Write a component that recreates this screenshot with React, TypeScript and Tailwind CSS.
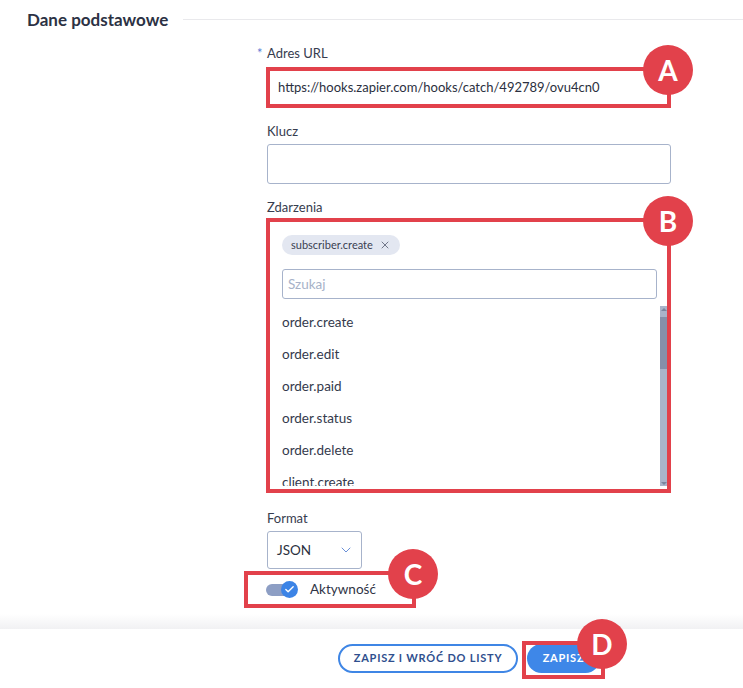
import { Check, ChevronDown, X } from "lucide-react";
import type { ReactNode } from "react";

const EVENTS = [
  "order.create",
  "order.edit",
  "order.paid",
  "order.status",
  "order.delete",
  "client.create",
];

function Marker({ letter }: { letter: string }) {
  return (
    <span className="absolute -right-[26px] -top-[26px] z-10 flex h-[50px] w-[50px] items-center justify-center rounded-full bg-[#e2414b] text-[28px] font-bold leading-none text-white">
      {letter}
    </span>
  );
}

function Label({ children, required }: { children: ReactNode; required?: boolean }) {
  return (
    <div className="relative h-[20px] text-[13px] leading-[20px] text-[#373c4e]">
      {required && (
        <span className="absolute -left-[10px] top-0 text-[#5b7fd6]">*</span>
      )}
      {children}
    </div>
  );
}

function Scrollbar() {
  return (
    <div className="flex h-full w-[7px] flex-col bg-[#a9b4ca]">
      <div className="flex h-[6px] items-center justify-center">
        <span className="h-0 w-0 border-x-[3px] border-b-[3px] border-x-transparent border-b-[#7a869e]" />
      </div>
      <div className="mt-[5px] h-[52px] bg-[#8590aa]" />
      <div className="flex-1" />
      <div className="flex h-[6px] items-center justify-center">
        <span className="h-0 w-0 border-x-[3px] border-t-[3px] border-x-transparent border-t-[#7a869e]" />
      </div>
    </div>
  );
}

export default function App() {
  return (
    <div
      className="h-[688px] w-[743px] overflow-hidden bg-white text-[#2f3445]"
      style={{ fontFamily: "Lato, 'Noto Sans', sans-serif" }}
    >
      {/* section header */}
      <div className="flex h-[40px] items-center pl-[27px]">
        <h2 className="text-[17px] font-bold text-[#2c3244]">Dane podstawowe</h2>
        <div className="ml-[15px] h-px flex-1 -translate-y-px bg-[#e9e9ec]" />
      </div>

      <div className="ml-[267px] flex w-[404px] flex-col">
        <div className="mt-[3px]">
          <Label required>Adres URL</Label>
        </div>
        <div className="relative -ml-px mt-[4px] flex h-[41px] items-center border-4 border-[#e2414b] pl-[8px] text-[13px] text-[#2b3040]">
          https://hooks.zapier.com/hooks/catch/492789/ovu4cn0
          <Marker letter="A" />
        </div>

        <div className="mt-[13px]">
          <Label>Klucz</Label>
        </div>
        <div className="mt-[3px] h-[40px] rounded-[3px] border border-[#a7b3cb]" />

        <div className="mt-[13px]">
          <Label>Zdarzenia</Label>
        </div>
        <div className="relative -ml-px mt-[1px] flex h-[275px] flex-col border-4 border-[#e2414b]">
          <div className="flex pl-[12px] pt-[13px]">
            <span className="flex h-[20px] items-center gap-[6px] rounded-full bg-[#e3e7f1] pl-[9px] pr-[9px] text-[11px] text-[#3a3f52]">
              subscriber.create
              <X size={12} strokeWidth={1.5} className="text-[#4b5166]" />
            </span>
          </div>
          <div className="ml-[12px] mr-[10px] mt-[14px] flex h-[30px] items-center rounded-[3px] border border-[#a7b3cb] pl-[5px] text-[13.5px] text-[#a7b2c8]">
            Szukaj
          </div>
          <div className="mt-[7px] flex h-[180px]">
            <ul className="flex-1 overflow-hidden pl-[12px] text-[13.5px] text-[#343a4c]">
              {EVENTS.map((e) => (
                <li key={e} className="flex h-[32px] items-center">
                  {e}
                </li>
              ))}
            </ul>
            <Scrollbar />
          </div>
          <Marker letter="B" />
        </div>

        <div className="mt-[15px]">
          <Label>Format</Label>
        </div>
        <div className="mt-[3px] flex h-[38px] w-[95px] items-center justify-between rounded-[3px] border border-[#a7b3cb] pl-[9px] pr-[7px] text-[13.5px] text-[#2b3040]">
          JSON
          <ChevronDown size={16} strokeWidth={1.4} className="text-[#5f88d4]" />
        </div>

        <div className="relative -ml-[23px] mt-[2px] flex h-[37px] w-[172px] items-center border-4 border-[#e2414b] pl-[18px]">
          <span className="relative flex h-[17px] w-[32px] items-center">
            <span className="h-[12px] w-[26px] rounded-full bg-[#8d9ec4]" />
            <span className="absolute right-0 top-0 flex h-[17px] w-[17px] items-center justify-center rounded-full bg-[#3c84e6]">
              <Check size={11} strokeWidth={3} className="text-white" />
            </span>
          </span>
          <span className="ml-[12px] text-[13.5px] text-[#2f3445]">Aktywność</span>
          <Marker letter="C" />
        </div>
      </div>

      {/* footer */}
      <div className="mt-[6px] h-[15px] bg-gradient-to-b from-white to-[#f1f1f3]" />
      <div className="ml-[267px] flex w-[404px] justify-center gap-[9px] pt-[15px]">
        <button
          type="button"
          className="h-[29px] w-[180px] rounded-full border-2 border-[#3f86e5] text-[11px] font-bold tracking-[0.07em] text-[#2f4f8e]"
        >
          ZAPISZ I WRÓĆ DO LISTY
        </button>
        <div className="relative">
          <button
            type="button"
            className="h-[29px] w-[73px] rounded-full bg-[#3e87e8] text-[11px] font-bold tracking-[0.07em] text-white"
          >
            ZAPISZ
          </button>
          <div className="pointer-events-none absolute -bottom-[6px] -left-[5px] -right-[5px] -top-[3px] border-4 border-[#e2414b]">
            <Marker letter="D" />
          </div>
        </div>
      </div>
    </div>
  );
}
